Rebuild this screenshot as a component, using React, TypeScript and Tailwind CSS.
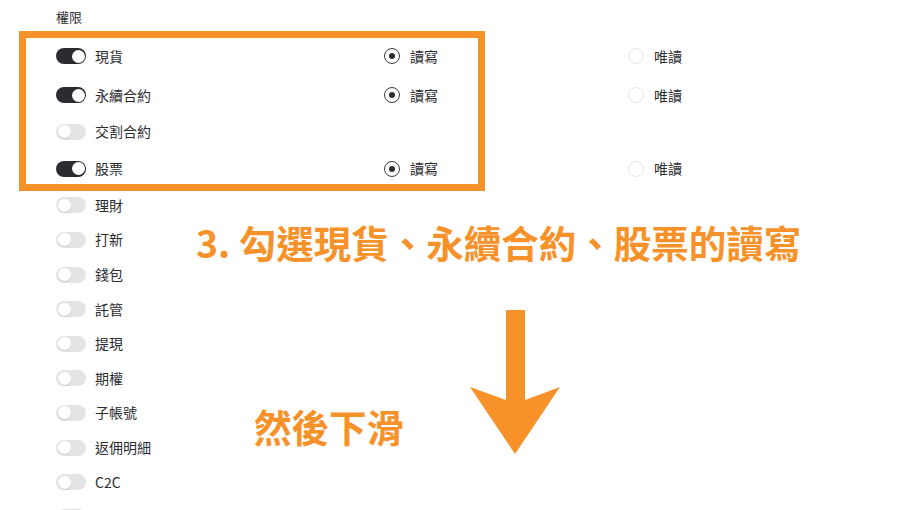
import React from 'react';

type Perm = { label: string; on: boolean; radios?: boolean };

const perms: Perm[] = [
  { label: '現貨', on: true, radios: true },
  { label: '永續合約', on: true, radios: true },
  { label: '交割合約', on: false },
  { label: '股票', on: true, radios: true },
  { label: '理財', on: false },
  { label: '打新', on: false },
  { label: '錢包', on: false },
  { label: '託管', on: false },
  { label: '提現', on: false },
  { label: '期權', on: false },
  { label: '子帳號', on: false },
  { label: '返佣明細', on: false },
  { label: 'C2C', on: false },
  { label: '', on: false },
];

const Toggle = ({ on }: { on: boolean }) => (
  <span
    className={`relative inline-block h-[16px] w-[30px] shrink-0 rounded-full ${
      on ? 'bg-[#2b2c30]' : 'bg-[#e3e4e6]'
    }`}
  >
    <span
      className={`absolute top-[1.5px] h-[13px] w-[13px] rounded-full bg-white shadow-[0_1px_1px_rgba(0,0,0,0.12)] ${
        on ? 'left-[15.5px]' : 'left-[1.5px]'
      }`}
    />
  </span>
);

const Radio = ({ checked, label }: { checked: boolean; label: string }) => (
  <div className="flex items-center gap-[10px]">
    <span
      className={`flex h-[16px] w-[16px] items-center justify-center rounded-full border ${
        checked ? 'border-[#3a3b3f]' : 'border-[#e6e6e8]'
      }`}
    >
      {checked && <span className="h-[6px] w-[6px] rounded-full bg-[#2b2c30]" />}
    </span>
    <span className="text-[14px] text-[#2b2c30]">{label}</span>
  </div>
);

export default function App() {
  return (
    <div
      className="relative h-[510px] w-[900px] overflow-hidden bg-white"
      style={{ fontFamily: '"Noto Sans CJK TC", "Noto Sans", sans-serif' }}
    >
      <div className="pl-[56px] pt-[7px]">
        <div className="h-[29.5px] text-[13px] leading-[20px] text-[#2b2c30]">權限</div>
        <div className="flex flex-col">
          {perms.map((p, i) => (
            <div
              key={i}
              className={`flex items-center ${p.radios ? 'h-[39px]' : 'h-[34.6px]'}`}
            >
              <div className="flex w-[328px] items-center gap-[9px]">
                <Toggle on={p.on} />
                {p.label && <span className="text-[14px] text-[#2b2c30]">{p.label}</span>}
              </div>
              {p.radios && (
                <>
                  <div className="w-[244px]">
                    <Radio checked label="讀寫" />
                  </div>
                  <Radio checked={false} label="唯讀" />
                </>
              )}
            </div>
          ))}
        </div>
      </div>

      {/* annotation overlay */}
      <div className="pointer-events-none absolute left-[19px] top-[31px] h-[160px] w-[466px] border-[7px] border-[#f7922a]" />

      <div className="absolute left-[196px] top-[216px] text-[37.5px] font-bold leading-[52px] text-[#f7922a]">
        3. 勾選現貨、永續合約、股票的讀寫
      </div>

      <div className="absolute left-[254px] top-[400px] text-[37.5px] font-bold leading-[52px] text-[#f7922a]">
        然後下滑
      </div>

      <svg
        className="absolute left-[470px] top-[310px]"
        width="90"
        height="145"
        viewBox="0 0 90 145"
      >
        <polygon
          points="36,0 55,0 55,90 90,77 45,144 0,77 36,90"
          fill="#f7922a"
        />
      </svg>
    </div>
  );
}
